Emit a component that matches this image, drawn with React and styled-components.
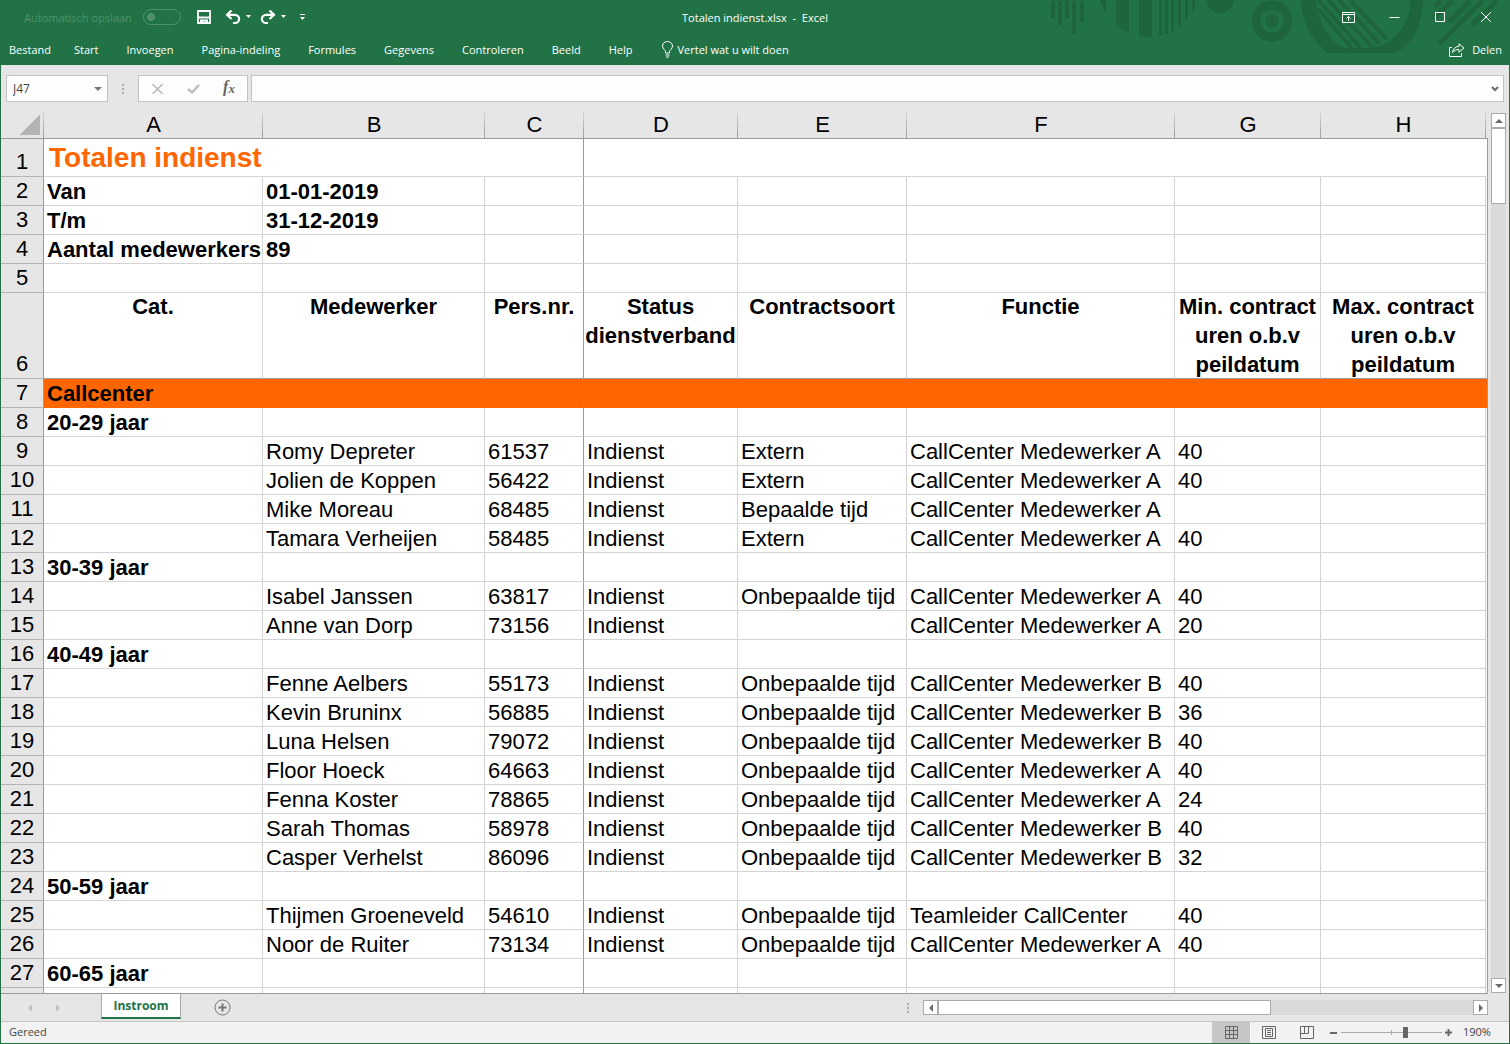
import React from "react";
import styled, { createGlobalStyle, css } from "styled-components";

const GREEN = "#217346";
const GREEN_DARK = "#1e653c";

const GlobalStyle = createGlobalStyle`
  * {
    box-sizing: border-box;
  }
  body {
    margin: 0;
    font-family: "Open Sans", "Noto Sans", sans-serif;
    font-size: 12px;
  }
  button, input {
    font: inherit;
  }
`;

const Window = styled.div`
  display: flex;
  flex-direction: column;
  height: 100vh;
  background: #e6e6e6;
  border: 1px solid ${GREEN};
  border-top: none;
`;

const Ribbon = styled.header`
  position: relative;
  background: ${GREEN};
  color: #ffffff;
  font-size: 11px;
`;

const Artwork = styled.svg`
  position: absolute;
  top: 0;
  right: 0;
  fill: ${GREEN_DARK};
  stroke: ${GREEN_DARK};
  stroke-width: 0;
`;

const TitleBar = styled.div`
  position: relative;
  display: grid;
  grid-template-columns: 1fr auto 1fr;
  align-items: center;
  height: 34px;
`;

const QuickAccess = styled.div`
  display: flex;
  align-items: center;
  padding-left: 23px;
`;

const AutoSave = styled.label`
  display: flex;
  align-items: center;
  gap: 11px;
  color: #4d9069;
`;

const Toggle = styled.input`
  appearance: none;
  width: 38px;
  height: 16px;
  margin: 0 10px 0 0;
  border: 1px solid #4d9069;
  border-radius: 8px;
  background: radial-gradient(circle at 7px 7px, #4d9069 4px, transparent 4px);
`;

const IconButton = styled.button`
  display: flex;
  align-items: center;
  justify-content: center;
  width: ${(props) => props.$width || 18}px;
  height: ${(props) => props.$height || 20}px;
  padding: 0;
  border: none;
  background: ${(props) => (props.$active ? "#c6c6c6" : "transparent")};
  color: inherit;
`;

const FileName = styled.h1`
  margin: 0;
  font-size: 11px;
  font-weight: 400;
  white-space: pre;
`;

const WindowControls = styled.div`
  display: flex;
  justify-content: flex-end;
`;

const Tabs = styled.nav`
  position: relative;
  display: flex;
  align-items: center;
  height: 31px;
`;

const TabLink = styled.a`
  display: flex;
  align-items: center;
  gap: 4px;
  padding: ${(props) => (props.$first ? "0 9px 0 8px" : "0 14px")};
  color: inherit;
  text-decoration: none;
  white-space: nowrap;
`;

const ShareLink = styled(TabLink)`
  gap: 7px;
  margin-left: auto;
  padding: 0 7px;
`;

const FormulaBar = styled.div`
  display: flex;
  padding: 10px 5px 9px;
`;

const BarBox = styled.div`
  display: flex;
  align-items: center;
  height: 27px;
  border: 1px solid #c3c3c3;
  background: #fdfdfd;
  color: #444444;
`;

const NameBox = styled(BarBox)`
  width: 102px;
`;

const BarInput = styled.input`
  flex: 1;
  min-width: 0;
  padding: 0 6px;
  border: none;
  outline: none;
  background: transparent;
  color: #444444;
`;

const FormulaActions = styled(BarBox)`
  width: 110px;
`;

const FormulaBox = styled(BarBox)`
  flex: 1;
  margin-left: 3px;
`;

const Dots = styled.span`
  width: ${(props) => props.$width}px;
  height: 12px;
  align-self: center;
  background: radial-gradient(#ababab 1px, transparent 1px) center top / 4px 4px
    repeat-y;
`;

const Sheet = styled.main`
  display: flex;
  flex: 1;
  min-height: 0;
`;

const GridPane = styled.div`
  flex: 1;
  min-width: 0;
  overflow: hidden;
  border-bottom: 1px solid #9b9b9b;
`;

const Grid = styled.table`
  table-layout: fixed;
  width: 100%;
  border-collapse: separate;
  border-spacing: 0;
  font-family: "Liberation Sans", Arial, sans-serif;
  font-size: 22px;
  line-height: 28px;
  color: #000000;
`;

const frozen = css`
  border-right-color: #9b9b9b;
`;

const ColumnHeader = styled.th`
  height: 28px;
  padding: 1px 0 0;
  border-bottom: 1px solid #9b9b9b;
  background: linear-gradient(#d8d8d8, #9b9b9b) right / 1px 100% no-repeat
    #e6e6e6;
  font-weight: 400;
  line-height: 26px;
  &:last-child {
    background: #e6e6e6;
  }
`;

const Corner = styled(ColumnHeader)`
  background: linear-gradient(
        135deg,
        transparent 50%,
        #b4b4b4 50%
      )
      19px 4px / 20px 20px no-repeat,
    linear-gradient(#d8d8d8, #9b9b9b) right / 1px 100% no-repeat #e6e6e6;
`;

const RowHeader = styled.th`
  height: ${(props) => props.$height}px;
  padding: 0;
  border-right: 1px solid #9b9b9b;
  border-bottom: 1px solid #b4b4b4;
  font-weight: 400;
  vertical-align: bottom;
`;

const Cell = styled.td`
  padding: 0 3px;
  border-right: 1px solid #d4d4d4;
  border-bottom: 1px solid ${(props) => (props.$lastFrozen ? "#9b9b9b" : "#d4d4d4")};
  background: #ffffff;
  font-weight: ${(props) => (props.$bold ? 700 : 400)};
  line-height: 26px;
  text-align: ${(props) => (props.$center ? "center" : "left")};
  vertical-align: ${(props) => (props.$center ? "top" : "bottom")};
  white-space: nowrap;
  ${(props) => props.$frozen && frozen}
  &:last-child {
    border-right-color: #9b9b9b;
  }
`;

const TitleCell = styled(Cell)`
  padding-left: 5px;
  color: #ff6600;
  font-size: 28px;
  line-height: 36px;
`;

const HeadingCell = styled(Cell)`
  padding: 0;
`;

const HeadingLines = styled.div`
  display: grid;
  gap: 2px;
  line-height: 27px;
`;

const BandCell = styled(Cell)`
  border-right-color: ${(props) => (props.$frozen ? "#d07a3c" : "#ff6600")};
  border-bottom-color: #ff6600;
  background: #ff6600;
`;

const VerticalBar = styled.div`
  display: flex;
  flex-direction: column;
  width: 15px;
  margin: 2px 3px 1px;
  background: #dadada;
`;

const HorizontalBar = styled.div`
  display: flex;
  width: 565px;
  height: 15px;
  margin-right: 21px;
  background: #dadada;
`;

const ScrollButton = styled.button`
  display: flex;
  align-items: center;
  justify-content: center;
  flex: none;
  width: 15px;
  height: 15px;
  padding: 0;
  border: 1px solid #ababab;
  background: #ffffff;
`;

const ScrollThumb = styled.div`
  ${(props) => (props.$vertical ? "height: 76px" : "width: 333px")};
  border: 1px solid #ababab;
  background: #ffffff;
`;

const ScrollSpace = styled.div`
  flex: 1;
`;

const SheetTabs = styled.div`
  display: flex;
  align-items: center;
  height: 28px;
  border-bottom: 1px solid #c6c6c6;
  color: #c0c0c0;
`;

const SheetArrows = styled.div`
  display: flex;
  width: 100px;
  padding-left: 15px;
`;

const SheetTab = styled.button`
  align-self: flex-start;
  width: 80px;
  height: 25px;
  padding: 0;
  border: solid #ababab;
  border-width: 0 1px;
  border-bottom: 2px solid ${GREEN};
  background: #ffffff;
  color: ${GREEN};
  font-weight: 700;
`;

const Spacer = styled.span`
  flex: 1;
`;

const StatusBar = styled.footer`
  display: flex;
  align-items: center;
  height: 21px;
  padding-left: 8px;
  background: #f2f2f2;
  color: #444444;
  font-size: 11px;
`;

const StatusText = styled.span`
  padding-bottom: 3px;
`;

const ViewButtons = styled.div`
  display: flex;
  color: #666666;
`;

const ZoomSlider = styled.input`
  appearance: none;
  width: 101px;
  height: 11px;
  margin: 0;
  background: linear-gradient(#ababab, #ababab) 50px center / 1px 5px no-repeat,
    linear-gradient(#ababab, #ababab) center / 100% 1px no-repeat;
  &::-webkit-slider-thumb {
    appearance: none;
    width: 5px;
    height: 11px;
    background: #666666;
  }
`;

const ZoomLabel = styled.label`
  width: 54px;
  padding: 0 0 3px 8px;
`;

const FunctionButton = styled(IconButton)`
  padding-bottom: 3px;
  font-family: "Liberation Serif", serif;
  font-size: 16px;
  font-style: italic;
  font-weight: 700;
  color: #666666;
  span {
    padding-top: 3px;
    font-size: 13px;
  }
`;

const tabs = [
  "Bestand",
  "Start",
  "Invoegen",
  "Pagina-indeling",
  "Formules",
  "Gegevens",
  "Controleren",
  "Beeld",
  "Help",
];

const columns = [
  { name: "A", width: 219 },
  { name: "B", width: 222 },
  { name: "C", width: 99 },
  { name: "D", width: 154 },
  { name: "E", width: 169 },
  { name: "F", width: 268 },
  { name: "G", width: 146 },
  { name: "H", width: 165 },
];

const headings = [
  ["Cat."],
  ["Medewerker"],
  ["Pers.nr."],
  ["Status", "dienstverband"],
  ["Contractsoort"],
  ["Functie"],
  ["Min. contract", "uren o.b.v", "peildatum"],
  ["Max. contract", "uren o.b.v", "peildatum"],
];

const summary = [
  ["Van", "01-01-2019"],
  ["T/m", "31-12-2019"],
  ["Aantal medewerkers", "89"],
  [],
];

const A = "CallCenter Medewerker A";
const B = "CallCenter Medewerker B";

const people = [
  ["20-29 jaar"],
  ["", "Romy Depreter", "61537", "Indienst", "Extern", A, "40"],
  ["", "Jolien de Koppen", "56422", "Indienst", "Extern", A, "40"],
  ["", "Mike Moreau", "68485", "Indienst", "Bepaalde tijd", A, ""],
  ["", "Tamara Verheijen", "58485", "Indienst", "Extern", A, "40"],
  ["30-39 jaar"],
  ["", "Isabel Janssen", "63817", "Indienst", "Onbepaalde tijd", A, "40"],
  ["", "Anne van Dorp", "73156", "Indienst", "", A, "20"],
  ["40-49 jaar"],
  ["", "Fenne Aelbers", "55173", "Indienst", "Onbepaalde tijd", B, "40"],
  ["", "Kevin Bruninx", "56885", "Indienst", "Onbepaalde tijd", B, "36"],
  ["", "Luna Helsen", "79072", "Indienst", "Onbepaalde tijd", B, "40"],
  ["", "Floor Hoeck", "64663", "Indienst", "Onbepaalde tijd", A, "40"],
  ["", "Fenna Koster", "78865", "Indienst", "Onbepaalde tijd", A, "24"],
  ["", "Sarah Thomas", "58978", "Indienst", "Onbepaalde tijd", B, "40"],
  ["", "Casper Verhelst", "86096", "Indienst", "Onbepaalde tijd", B, "32"],
  ["50-59 jaar"],
  ["", "Thijmen Groeneveld", "54610", "Indienst", "Onbepaalde tijd", "Teamleider CallCenter", "40"],
  ["", "Noor de Ruiter", "73134", "Indienst", "Onbepaalde tijd", A, "40"],
  ["60-65 jaar"],
];

const Arrow = ({ rotate = 0, size = 8, color = "#6a6a6a" }) => (
  <svg width={size} height={size} viewBox="0 0 8 8">
    <path d="M0 6L4 2L8 6z" fill={color} transform={`rotate(${rotate} 4 4)`} />
  </svg>
);

const RibbonArtwork = () => (
  <Artwork width="460" height="65" viewBox="1049 0 460 65" aria-hidden="true">
    <path d="M1051 1h4v17h-4zM1058 1h4v24h-4zM1065 1h4v17h-4zM1072 1h4v33h-4zM1080 1h4v21h-4z" />
    <clipPath id="disc">
      <circle cx="1149" cy="-14" r="51" />
    </clipPath>
    <g clipPath="url(#disc)">
      <path d="M1098 0h8v40h-8zM1116 0h13v40h-13zM1139 0h13v40h-13zM1159 0h3v40h-3zM1165 0h3v40h-3zM1171 0h3v40h-3zM1178 0h3v40h-3zM1185 0h3v40h-3zM1192 0h3v40h-3z" />
    </g>
    <circle cx="1220" cy="-1" r="14" />
    <circle cx="1272" cy="21" r="16" fill="none" strokeWidth="9" />
    <circle cx="1272" cy="21" r="7" />
    <path d="M1301 0h15c2 22 12 38 27 48h28c24-4 39-24 39-48h13c0 24-10 44-28 53h-67c-16-13-26-29-27-53z" />
    <path
      d="M1317 8L1352 48M1318 0L1361 48M1328 0L1372 47M1339 0L1380 44M1350 0L1387 39"
      fill="none"
      strokeWidth="4"
    />
    <path
      d="M1434 7L1441 1M1435 17L1452 1M1449 22L1470 1M1439 44L1482 1M1472 25L1497 1"
      fill="none"
      strokeWidth="5"
    />
  </Artwork>
);

const Header = () => {
  return (
    <Ribbon>
      <RibbonArtwork />
      <TitleBar>
        <QuickAccess>
          <AutoSave>
            Automatisch opslaan
            <Toggle type="checkbox" role="switch" disabled />
          </AutoSave>
          <IconButton $width={26} aria-label="Opslaan">
            <svg width="14" height="14" viewBox="0 0 14 14">
              <path d="M1 1h12v12H1zM1 7.500h12" fill="none" stroke="#fff" strokeWidth="1.800" />
              <path d="M3 9.500h8V14H8.500v-2.500h-2V14H3z" fill="#fff" />
            </svg>
          </IconButton>
          <IconButton $width={43} aria-label="Ongedaan maken">
            <svg width="27" height="14" viewBox="0 0 27 14">
              <path d="M6.500 0.500L2 4.800L6.500 9M2 4.800H10A4 4 0 0 1 10 13H8" fill="none" stroke="#fff" strokeWidth="2.200" />
              <path d="M21 5h5l-2.500 3z" fill="#fff" />
            </svg>
          </IconButton>
          <IconButton $width={27} aria-label="Opnieuw">
            <svg width="27" height="14" viewBox="0 0 27 14">
              <path d="M9.500 0.500L14 4.800L9.500 9M14 4.800H6A4 4 0 0 0 6 13H8" fill="none" stroke="#fff" strokeWidth="2.200" />
              <path d="M21 5h5l-2.500 3z" fill="#fff" />
            </svg>
          </IconButton>
          <IconButton $width={31} aria-label="Werkbalk aanpassen">
            <svg width="5" height="7" viewBox="0 0 5 7">
              <path d="M0 0h5v1H0zM0 3h5L2.500 6z" fill="#fff" />
            </svg>
          </IconButton>
        </QuickAccess>
        <FileName>{"Totalen indienst.xlsx  -  Excel"}</FileName>
        <WindowControls>
          <IconButton $width={46} aria-label="Weergaveopties voor lint">
            <svg width="13" height="11" viewBox="0 0 13 11" fill="none" stroke="#fff">
              <path d="M0.500 0.500h12v10H0.500zM0.500 2.500h12M6.500 9V4.500M4.500 6.500L6.500 4.500L8.500 6.500" />
            </svg>
          </IconButton>
          <IconButton $width={46} aria-label="Minimaliseren">
            <svg width="11" height="11" viewBox="0 0 11 11" stroke="#fff">
              <path d="M0.500 5.500h10" />
            </svg>
          </IconButton>
          <IconButton $width={46} aria-label="Maximaliseren">
            <svg width="10" height="10" viewBox="0 0 10 10" fill="none" stroke="#fff">
              <path d="M0.500 0.500h9v9h-9z" />
            </svg>
          </IconButton>
          <IconButton $width={46} aria-label="Sluiten">
            <svg width="10" height="10" viewBox="0 0 10 10" stroke="#fff">
              <path d="M0 0L10 10M10 0L0 10" />
            </svg>
          </IconButton>
        </WindowControls>
      </TitleBar>
      <Tabs>
        {tabs.map((tab, i) => (
          <TabLink key={tab} href="#" $first={i === 0}>
            {tab}
          </TabLink>
        ))}
        <TabLink href="#">
          <svg width="13" height="17" viewBox="0 0 13 17" fill="none" stroke="#fff">
            <path d="M4.500 12V10.500C4.500 9 1.500 8 1.500 5a5 4.500 0 0 1 10 0C11.500 8 8.500 9 8.500 10.500V12zM4.500 14h4M5 16h3" />
          </svg>
          Vertel wat u wilt doen
        </TabLink>
        <ShareLink href="#">
          <svg width="16" height="14" viewBox="0 0 16 14" fill="none" stroke="#fff">
            <path d="M3 4.500H0.500v9h12V10" />
            <path d="M10 0.800L15 5L10 9.200V6.500C7 6.500 5 7.500 3.500 9.500C4 5.500 6.500 3.500 10 3.300z" />
          </svg>
          Delen
        </ShareLink>
      </Tabs>
    </Ribbon>
  );
};

const Formula = () => {
  return (
    <FormulaBar>
      <NameBox>
        <BarInput aria-label="Naamvak" defaultValue="J47" />
        <IconButton aria-label="Naamvak openen">
          <Arrow rotate={180} color="#777777" />
        </IconButton>
      </NameBox>
      <Dots $width={30} />
      <FormulaActions>
        <IconButton $width={36} aria-label="Annuleren">
          <svg width="11" height="10" viewBox="0 0 11 10" stroke="#bdbdbd" strokeWidth="1.600">
            <path d="M0.500 0L10.500 10M10.500 0L0.500 10" />
          </svg>
        </IconButton>
        <IconButton $width={36} aria-label="Invoeren">
          <svg width="13" height="10" viewBox="0 0 13 10" fill="none" stroke="#bdbdbd" strokeWidth="2.400">
            <path d="M1 5L5 8.500L12 1" />
          </svg>
        </IconButton>
        <FunctionButton $width={36} aria-label="Functie invoegen">
          f<span>x</span>
        </FunctionButton>
      </FormulaActions>
      <FormulaBox>
        <BarInput aria-label="Formulebalk" />
        <IconButton $width={16} aria-label="Formulebalk uitvouwen">
          <svg width="8" height="6" viewBox="0 0 8 6" fill="none" stroke="#6a6a6a" strokeWidth="2">
            <path d="M1 1L4 4L7 1" />
          </svg>
        </IconButton>
      </FormulaBox>
    </FormulaBar>
  );
};

const Row = ({ number, values = [], bold }) => (
  <tr>
    <RowHeader $height={29} scope="row">
      {number}
    </RowHeader>
    {columns.map((column, i) => (
      <Cell key={column.name} $bold={bold || i === 0} $frozen={i === 2}>
        {values[i]}
      </Cell>
    ))}
    <Cell />
  </tr>
);

const Spreadsheet = () => {
  return (
    <Grid>
      <colgroup>
        <col width="43" />
        {columns.map((column) => (
          <col key={column.name} width={column.width} />
        ))}
        <col />
      </colgroup>
      <thead>
        <tr>
          <Corner aria-label="Alles selecteren" />
          {columns.map((column) => (
            <ColumnHeader key={column.name} scope="col">
              {column.name}
            </ColumnHeader>
          ))}
          <ColumnHeader />
        </tr>
      </thead>
      <tbody>
        <tr>
          <RowHeader $height={38} scope="row">
            1
          </RowHeader>
          <TitleCell colSpan={3} $bold $frozen>
            Totalen indienst
          </TitleCell>
          <Cell colSpan={6} />
        </tr>
        {summary.map((values, i) => (
          <Row key={i} number={i + 2} values={values} bold />
        ))}
        <tr>
          <RowHeader $height={86} scope="row">
            6
          </RowHeader>
          {headings.map((lines, i) => (
            <HeadingCell key={i} $bold $center $lastFrozen $frozen={i === 2}>
              <HeadingLines>
                {lines.map((line) => (
                  <span key={line}>{line}</span>
                ))}
              </HeadingLines>
            </HeadingCell>
          ))}
          <Cell $lastFrozen />
        </tr>
        <tr>
          <RowHeader $height={29} scope="row">
            7
          </RowHeader>
          <BandCell $bold>Callcenter</BandCell>
          <BandCell />
          <BandCell $frozen />
          <BandCell colSpan={6} />
        </tr>
        {people.map((values, i) => (
          <Row key={i} number={i + 8} values={values} />
        ))}
        <Row />
      </tbody>
    </Grid>
  );
};

const Footer = () => {
  return (
    <>
      <SheetTabs>
        <SheetArrows>
          <IconButton $width={28} aria-label="Vorig blad">
            <Arrow rotate={270} color="#c0c0c0" />
          </IconButton>
          <IconButton $width={28} aria-label="Volgend blad">
            <Arrow rotate={90} color="#c0c0c0" />
          </IconButton>
        </SheetArrows>
        <SheetTab>Instroom</SheetTab>
        <IconButton $width={82} aria-label="Nieuw blad">
          <svg width="17" height="17" viewBox="0 0 17 17" fill="none" stroke="#777777">
            <circle cx="8.500" cy="8.500" r="7.500" />
            <path d="M8.500 4.500v8M4.500 8.500h8" strokeWidth="2" />
          </svg>
        </IconButton>
        <Spacer />
        <Dots $width={31} />
        <HorizontalBar>
          <ScrollButton aria-label="Naar links schuiven">
            <Arrow rotate={270} />
          </ScrollButton>
          <ScrollThumb />
          <ScrollSpace />
          <ScrollButton aria-label="Naar rechts schuiven">
            <Arrow rotate={90} />
          </ScrollButton>
        </HorizontalBar>
      </SheetTabs>
      <StatusBar>
        <StatusText>Gereed</StatusText>
        <Spacer />
        <ViewButtons>
          <IconButton $width={38} $height={21} $active aria-label="Normaal">
            <svg width="13" height="13" viewBox="0 0 13 13" fill="none" stroke="currentColor">
              <path d="M0.500 0.500h12v12H0.500zM4.500 0v13M8.500 0v13M0 4.500h13M0 8.500h13" />
            </svg>
          </IconButton>
          <IconButton $width={38} $height={21} aria-label="Pagina-indeling">
            <svg width="14" height="13" viewBox="0 0 14 13" fill="none" stroke="currentColor">
              <path d="M0.500 0.500h13v12H0.500zM3.500 2.500h7v8h-7zM5 4.500h4M5 6.500h4M5 8.500h4" />
            </svg>
          </IconButton>
          <IconButton $width={38} $height={21} aria-label="Pagina-eindevoorbeeld">
            <svg width="14" height="13" viewBox="0 0 14 13" fill="none" stroke="currentColor">
              <path d="M0.500 0.500h13v12H0.500zM0.500 7.500h8V0.500M4.500 0.500v7" />
            </svg>
          </IconButton>
          <IconButton $width={15} $height={21} aria-label="Uitzoomen">
            <svg width="7" height="2">
              <path d="M0 0h7v2H0z" fill="currentColor" />
            </svg>
          </IconButton>
        </ViewButtons>
        <ZoomSlider id="zoom" type="range" min="10" max="290" defaultValue="190" />
        <IconButton $width={13} $height={21} aria-label="Inzoomen">
          <svg width="7" height="7" viewBox="0 0 7 7">
            <path d="M0 2.500h7v2H0zM2.500 0h2v7h-2z" fill="#666666" />
          </svg>
        </IconButton>
        <ZoomLabel htmlFor="zoom">190%</ZoomLabel>
      </StatusBar>
    </>
  );
};

const App = () => {
  return (
    <Window>
      <GlobalStyle />
      <Header />
      <Formula />
      <Sheet>
        <GridPane>
          <Spreadsheet />
        </GridPane>
        <VerticalBar>
          <ScrollButton aria-label="Omhoog schuiven">
            <Arrow />
          </ScrollButton>
          <ScrollThumb $vertical />
          <ScrollSpace />
          <ScrollButton aria-label="Omlaag schuiven">
            <Arrow rotate={180} />
          </ScrollButton>
        </VerticalBar>
      </Sheet>
      <Footer />
    </Window>
  );
};

export default App;
